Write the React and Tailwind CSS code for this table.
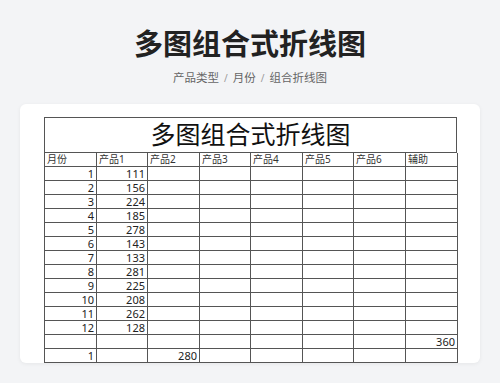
const cols = "grid grid-cols-[52px_51px_52px_51px_52px_51px_52px_52px]";

const headers = ["月份", "产品1", "产品2", "产品3", "产品4", "产品5", "产品6", "辅助"];

const values = [111, 156, 224, 185, 278, 143, 133, 281, 225, 208, 262, 128];

const rows = [
  ...values.map((v, i) => [i + 1, v, "", "", "", "", "", ""]),
  ["", "", "", "", "", "", "", 360],
  [1, "", 280, "", "", "", "", ""],
];

function Row({ cells, header }) {
  return (
    <div className={`${cols} h-[14px]`}>
      {cells.map((c, i) => (
        <div
          key={i}
          className={`border-r border-b border-[#555] h-[14px] leading-[13px] overflow-hidden whitespace-nowrap ${
            header ? "text-left pl-[2px] text-[10px] text-[#333]" : "text-right pr-[2px] text-[11px] text-[#222]"
          }`}
        >
          {c}
        </div>
      ))}
    </div>
  );
}

export default function App() {
  return (
    <div
      className="w-[500px] h-[383px] bg-[#f3f4f6] overflow-hidden flex flex-col items-center"
      style={{ fontFamily: '"Noto Sans", "Noto Sans CJK SC", sans-serif' }}
    >
      {/* Header */}
      <h1 className="mt-[26px] text-[29px] leading-[36px] font-bold text-[#222]">
        多图组合式折线图
      </h1>
      <div className="mt-[8px] flex items-center gap-[5px] text-[11.5px] leading-[16px] text-[#666]">
        <span>产品类型</span>
        <span className="text-[#999] text-[10px]">/</span>
        <span>月份</span>
        <span className="text-[#999] text-[10px]">/</span>
        <span>组合折线图</span>
      </div>

      {/* Card */}
      <div className="mt-[18px] w-[460px] h-[259px] bg-white rounded-[6px] shadow-[0_1px_4px_rgba(0,0,0,0.06)] overflow-hidden pt-[13px] pl-[24px]">
        <div className="w-[413px] border-l border-t border-[#555]">
          <div className="h-[35px] border-r border-b border-[#555] flex items-center justify-center text-[25px] text-[#111]">
            多图组合式折线图
          </div>
          <Row cells={headers} header />
          {rows.map((r, i) => (
            <Row key={i} cells={r} />
          ))}
        </div>
      </div>
    </div>
  );
}
